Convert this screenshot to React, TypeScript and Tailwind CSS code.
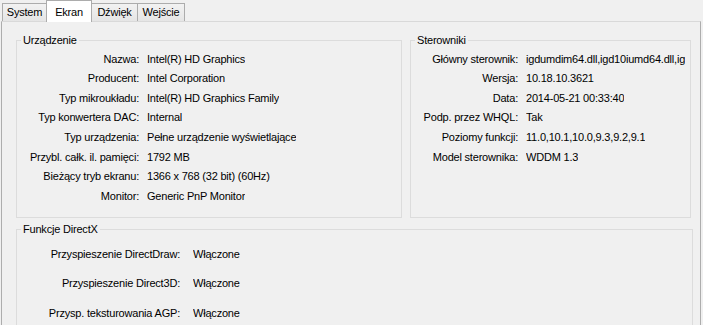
import React from "react";

const tabs = ["System", "Ekran", "Dźwięk", "Wejście"];

const device: [string, string][] = [
  ["Nazwa:", "Intel(R) HD Graphics"],
  ["Producent:", "Intel Corporation"],
  ["Typ mikroukładu:", "Intel(R) HD Graphics Family"],
  ["Typ konwertera DAC:", "Internal"],
  ["Typ urządzenia:", "Pełne urządzenie wyświetlające"],
  ["Przybl. całk. il. pamięci:", "1792 MB"],
  ["Bieżący tryb ekranu:", "1366 x 768 (32 bit) (60Hz)"],
  ["Monitor:", "Generic PnP Monitor"],
];

const drivers: [string, string][] = [
  ["Główny sterownik:", "igdumdim64.dll,igd10iumd64.dll,ig"],
  ["Wersja:", "10.18.10.3621"],
  ["Data:", "2014-05-21 00:33:40"],
  ["Podp. przez WHQL:", "Tak"],
  ["Poziomy funkcji:", "11.0,10.1,10.0,9.3,9.2,9.1"],
  ["Model sterownika:", "WDDM 1.3"],
];

const directx: [string, string][] = [
  ["Przyspieszenie DirectDraw:", "Włączone"],
  ["Przyspieszenie Direct3D:", "Włączone"],
  ["Przysp. teksturowania AGP:", "Włączone"],
];

function Group({
  title,
  className,
  children,
}: {
  title: string;
  className: string;
  children: React.ReactNode;
}) {
  return (
    <fieldset className={`min-w-0 border border-[#dcdcdc] ${className}`}>
      <legend className="ml-[4px] px-[2px] leading-[14px]">{title}</legend>
      {children}
    </fieldset>
  );
}

function Rows({
  rows,
  labelWidth,
  gap,
  rowHeight,
}: {
  rows: [string, string][];
  labelWidth: string;
  gap: string;
  rowHeight: string;
}) {
  return (
    <div className="flex flex-col">
      {rows.map(([label, value]) => (
        <div key={label} className={`flex items-center ${rowHeight}`}>
          <span className={`shrink-0 text-right whitespace-nowrap ${labelWidth}`}>{label}</span>
          <span className={`whitespace-nowrap overflow-hidden ${gap}`}>{value}</span>
        </div>
      ))}
    </div>
  );
}

export default function App() {
  return (
    <div
      className="w-[703px] h-[325px] overflow-hidden bg-[#f0f0f0] text-[11px] tracking-[-0.2px] text-black"
      style={{ fontFamily: '"Liberation Sans", Arial, sans-serif' }}
    >
      <div className="flex h-[21px] items-end pl-[2px]">
        {tabs.map((t, i) => {
          const active = t === "Ekran";
          const widths = ["w-[45px]", "w-[46px]", "w-[47px]", "w-[48px]"];
          return (
            <div
              key={t}
              className={`${widths[i]} ${i > 0 ? "-ml-px" : ""} flex justify-center border border-b-0 border-[#acacac] ${
                active
                  ? "relative z-10 -mb-px h-[22px] items-start bg-white pt-[3px]"
                  : "h-[18px] items-center bg-gradient-to-b from-[#f2f2f2] to-[#e5e5e5]"
              }`}
            >
              {t}
            </div>
          );
        })}
      </div>
      <div className="ml-px h-[304px] w-[700px] border border-b-0 border-[#adadad] border-t-[#d9d9d9] pl-[14px] pt-[11px]">
        <div className="flex gap-[8px]">
          <Group title="Urządzenie" className="h-[185px] w-[386px]">
            <div className="pt-[2px]">
              <Rows rows={device} labelWidth="w-[122px]" gap="ml-[8px] max-w-[250px]" rowHeight="h-[19.6px]" />
            </div>
          </Group>
          <Group title="Sterowniki" className="h-[185px] w-[281px]">
            <div className="pt-[2px]">
              <Rows rows={drivers} labelWidth="w-[107px]" gap="ml-[8px] max-w-[160px]" rowHeight="h-[19.6px]" />
            </div>
          </Group>
        </div>
        <Group title="Funkcje DirectX" className="mt-[4px] h-[120px] w-[677px]">
          <div className="pt-[3px]">
            <Rows rows={directx} labelWidth="w-[163px]" gap="ml-[13px]" rowHeight="h-[29.5px]" />
          </div>
        </Group>
      </div>
    </div>
  );
}
